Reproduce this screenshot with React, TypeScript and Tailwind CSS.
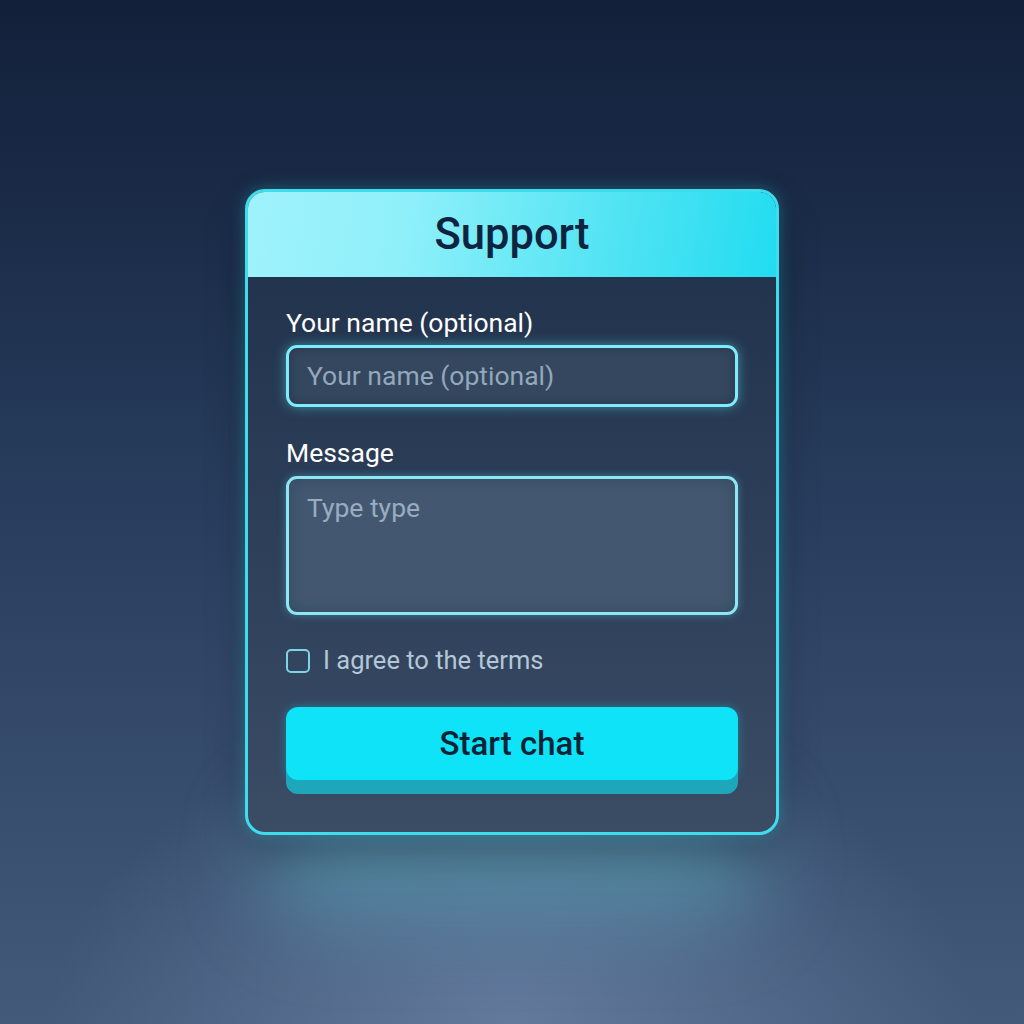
import { useState } from "react"

export default function App() {
  const [agreed, setAgreed] = useState(false)

  return (
    <div className="relative min-h-screen w-full overflow-hidden bg-[radial-gradient(ellipse_45%_30%_at_50%_100%,rgba(110,132,168,0.75)_0%,rgba(110,132,168,0)_100%),linear-gradient(180deg,#13203a_0%,#1c2e4b_25%,#293e5e_50%,#364c6d_75%,#435a7b_100%)] font-['Roboto','Liberation_Sans',sans-serif]">
      {/* teal glow under card */}
      <div className="pointer-events-none absolute left-1/2 top-[800px] h-[120px] w-[500px] -translate-x-1/2 rounded-full bg-[#58a3b6]/55 blur-[40px]" />

      <div className="relative flex justify-center pt-[189px]">
        <div className="w-[534px] overflow-hidden rounded-[20px] border-[3px] border-[#3fdcee] bg-[linear-gradient(180deg,#1f3049_0%,#2c3e58_50%,#3b4c65_100%)] shadow-[0_0_16px_rgba(60,220,240,0.3),0_20px_40px_rgba(0,0,0,0.25)]">
          {/* Header */}
          <div className="flex h-[85px] items-center justify-center bg-[linear-gradient(100deg,#9ff2fb_0%,#8ff0fa_30%,#4fe3f3_70%,#22dcf0_100%)]">
            <h1 className="text-[43.5px] font-medium leading-none text-[#0c2440]">Support</h1>
          </div>

          {/* Form */}
          <div className="flex flex-col px-[38px] pb-[52px] pt-[30px]">
            <label className="text-[26.5px] leading-[32px] text-white">Your name (optional)</label>
            <div className="mt-[6px] flex h-[62px] items-center rounded-[11px] border-[3px] border-[#80ebf9] bg-[#34475f] px-[18px] shadow-[0_0_12px_rgba(90,225,245,0.5),inset_0_0_10px_rgba(20,40,60,0.5)]">
              <span className="text-[26.5px] leading-none text-[#93a7bd]">Your name (optional)</span>
            </div>

            <label className="mt-[30px] text-[26.5px] leading-[32px] text-white">Message</label>
            <div className="mt-[7px] h-[139px] rounded-[11px] border-[3px] border-[#8fe6f3] bg-[#435870] px-[18px] pt-[16px] shadow-[0_0_8px_rgba(90,225,245,0.35),inset_0_0_14px_rgba(30,60,80,0.5)]">
              <span className="text-[26.5px] leading-none text-[#98adc2]">Type type</span>
            </div>

            <button
              onClick={() => setAgreed(!agreed)}
              className="mt-[34px] flex h-[24px] items-center gap-[13px] text-left"
            >
              <span className="flex h-[24px] w-[24px] items-center justify-center rounded-[5px] border-[2px] border-[#7ed4e4]">
                {agreed && <span className="h-[10px] w-[10px] rounded-[2px] bg-[#7ed4e4]" />}
              </span>
              <span className="text-[25.5px] leading-none text-[#b4c7d7]">I agree to the terms</span>
            </button>

            <button className="mt-[34px] flex h-[73px] items-center justify-center rounded-[12px] bg-[#0ee3f7] text-[33px] font-medium text-[#0a2236] shadow-[0_14px_0_#1ea7ba,0_0_10px_rgba(20,220,245,0.35)]">
              Start chat
            </button>
          </div>
        </div>
      </div>
    </div>
  )
}
